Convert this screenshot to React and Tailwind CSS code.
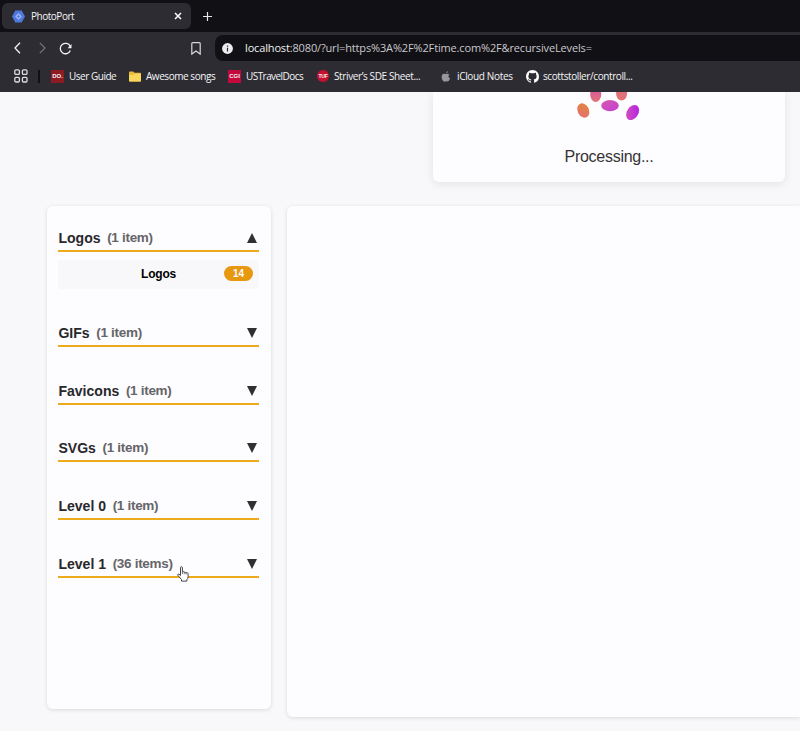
import React from "react";

const sections = [
  { title: "Logos", count: "(1 item)", open: true },
  { title: "GIFs", count: "(1 item)" },
  { title: "Favicons", count: "(1 item)" },
  { title: "SVGs", count: "(1 item)" },
  { title: "Level 0", count: "(1 item)" },
  { title: "Level 1", count: "(36 items)" },
];

function TabStrip() {
  return (
    <div className="flex h-8 items-start bg-[#111014] pl-[2px] pt-[3px]">
      <div className="flex h-[26px] w-[189px] items-center rounded-md bg-[#2d2c32] pl-[10px] pr-[9px]">
        <svg width="13" height="13" viewBox="0 0 13 13">
          <path d="M3.3 .4h6.4L13 6.5l-3.3 6.1H3.3L0 6.5z" fill="#4f78dd" />
          <path d="M6.5 3l3.5 3.5-3.5 3.5L3 6.5z" fill="#96b2f3" />
          <path d="M5 6.5h3M6.5 5v3" stroke="#4f78dd" strokeWidth=".8" />
        </svg>
        <span className="ml-[6px] text-[10px] tracking-[-0.48px] text-[#f4f4f6]">PhotoPort</span>
        <svg className="ml-auto" width="8" height="8" viewBox="0 0 8 8" stroke="#fff" strokeWidth="1.5">
          <path d="M1 1l6 6M7 1L1 7" />
        </svg>
      </div>
      <svg className="ml-[12px] mt-[9px]" width="9" height="9" viewBox="0 0 9 9" stroke="#e6e6e8" strokeWidth="1.2">
        <path d="M4.5 0v9M0 4.5h9" />
      </svg>
    </div>
  );
}

function Toolbar() {
  return (
    <div className="flex h-8 items-center pl-[14px]">
      <svg width="7" height="12" viewBox="0 0 7 12" fill="none" stroke="#f2f2f4" strokeWidth="1.3">
        <path d="M6 .8L1 6l5 5.2" />
      </svg>
      <svg className="ml-[18px]" width="7" height="12" viewBox="0 0 7 12" fill="none" stroke="#77767c" strokeWidth="1.2">
        <path d="M.8 .8L6 6 .8 11.2" />
      </svg>
      <svg className="ml-[13px]" width="13" height="13" viewBox="0 0 13 13" fill="none" stroke="#f2f2f4" strokeWidth="1.3">
        <path d="M11.3 8.5A5.2 5.2 0 1 1 11.2 4.3" />
        <path d="M12.5 2v4.2H8.6z" fill="#f2f2f4" stroke="none" />
      </svg>
      <svg className="ml-[119px]" width="10" height="13" viewBox="0 0 10 13" fill="none" stroke="#d8d8db" strokeWidth="1.2">
        <path d="M1.7 .7h6.6q.9 0 .9.9v10.5L5 9 .8 12.1V1.6q0-.9.9-.9z" />
      </svg>
      <div className="ml-[14px] flex h-[26px] flex-1 items-center rounded-l-lg bg-[#111014] pl-[7px]">
        <svg width="11" height="11" viewBox="0 0 11 11">
          <circle cx="5.5" cy="5.5" r="5.4" fill="#ececef" />
          <path d="M5.5 4.8v3.6M5.5 2.4v1.3" stroke="#29282d" strokeWidth="1.2" />
        </svg>
        <span className="ml-3 whitespace-nowrap text-[11px] tracking-[-0.15px] text-[#c9c9ce]">
          <span className="text-[#f0f0f2]">localhost</span>:8080/?url=https%3A%2F%2Ftime.com%2F&amp;recursiveLevels=
        </span>
      </div>
    </div>
  );
}

function Bookmark({ icon, label, className }) {
  return (
    <div className={"flex shrink-0 items-center whitespace-nowrap text-[10px] text-[#f4f4f6] " + className}>
      {icon}
      <span className="ml-[5px]">{label}</span>
    </div>
  );
}

function Bookmarks() {
  return (
    <div className="flex h-[28px] items-center pb-[4px] pl-[14px]">
      <svg width="14" height="14" viewBox="0 0 14 14" fill="none" stroke="#dedee1" strokeWidth="1.3">
        <rect x=".8" y=".8" width="4.6" height="4.6" rx="1.2" />
        <rect x="8.4" y=".8" width="4.6" height="4.6" rx="1.2" />
        <rect x=".8" y="8.4" width="4.6" height="4.6" rx="1.2" />
        <rect x="8.4" y="8.4" width="4.6" height="4.6" rx="1.2" />
      </svg>
      <div className="ml-[10px] h-[13px] w-[2px] bg-[#111014]" />
      <Bookmark
        className="ml-[11px] w-[78px] tracking-[-0.48px]"
        label="User Guide"
        icon={<span className="flex h-[13px] w-[13px] items-center justify-center bg-[#8e1b22] font-['Liberation_Sans'] text-[6px] font-bold tracking-normal">DO.</span>}
      />
      <Bookmark
        className="w-[99px] tracking-[-0.45px]"
        label="Awesome songs"
        icon={
          <svg width="12" height="11" viewBox="0 0 12 11">
            <path d="M0 1.2Q0 .5.7.5h3.6l1.2 1.3h5.8q.7 0 .7.7v7.3q0 .7-.7.7H.7q-.7 0-.7-.7z" fill="#e9b93a" />
            <path d="M0 3.7h4.6l1-1h5.7q.7 0 .7.7v6.4q0 .7-.7.7H.7q-.7 0-.7-.7z" fill="#f8d75c" />
          </svg>
        }
      />
      <Bookmark
        className="w-[89px] tracking-[-0.56px]"
        label="USTravelDocs"
        icon={<span className="flex h-[13px] w-[13px] items-center justify-center bg-[#c3093b] font-['Liberation_Sans'] text-[6px] font-bold tracking-normal">CGI</span>}
      />
      <Bookmark
        className="w-[124px] tracking-[-0.38px]"
        label="Striver’s SDE Sheet..."
        icon={<span className="flex h-3 w-3 items-center justify-center rounded-full bg-[#c8102e] font-['Liberation_Sans'] text-[5px] font-bold leading-none tracking-tighter">TUF</span>}
      />
      <Bookmark
        className="w-[85px] tracking-[-0.34px]"
        label="iCloud Notes"
        icon={
          <svg className="mr-px" width="10" height="11" viewBox="0 0 10 11" fill="#98979b">
            <path d="M7 0q.2 1.7-1.8 2.5Q5.100 .8 7 0zM5.200 3.100q1.500-.8 3.200.2-2.200 2.300.7 4.100Q7.900 11.100 5.300 10.300 1.900 11.700.8 7.300.2 2.300 3.800 2.700q.8.1 1.400.4z" />
          </svg>
        }
      />
      <Bookmark
        className="tracking-[-0.4px]"
        label="scottstoller/controll..."
        icon={
          <svg className="-mr-px" width="13" height="13" viewBox="0 0 16 16" fill="#fff">
            <path d="M8 0C3.580 0 0 3.580 0 8c0 3.540 2.290 6.530 5.470 7.590.4.070.55-.17.55-.38 0-.19-.01-.82-.01-1.490-2.010.37-2.530-.49-2.690-.94-.09-.23-.48-.94-.82-1.130-.28-.15-.68-.52-.01-.53.63-.01 1.080.58 1.230.82.72 1.210 1.870.87 2.330.66.070-.52.28-.87.51-1.070-1.780-.2-3.640-.89-3.640-3.950 0-.87.31-1.590.82-2.150-.08-.2-.36-1.020.08-2.120 0 0 .67-.21 2.200.82.64-.18 1.320-.27 2-.27s1.360.09 2 .27c1.530-1.040 2.200-.82 2.200-.82.44 1.100.16 1.920.08 2.120.51.56.82 1.270.82 2.150 0 3.070-1.870 3.750-3.650 3.950.29.25.54.73.54 1.480 0 1.070-.01 1.930-.01 2.200 0 .21.15.46.55.38A8.010 8.010 0 0 0 16 8c0-4.420-3.580-8-8-8z" />
          </svg>
        }
      />
    </div>
  );
}

function Loader() {
  return (
    <svg className="mx-auto" width="70" height="30" viewBox="0 0 70 30">
      <defs>
        <linearGradient id="dotA" x1="0" y1="0" x2="0" y2="1"><stop stopColor="#d64fa8" /><stop offset="1" stopColor="#e17675" /></linearGradient>
        <linearGradient id="dotB" x1="1" y1="0" x2="0" y2="1"><stop stopColor="#df6f88" /><stop offset="1" stopColor="#e2736c" /></linearGradient>
        <linearGradient id="dotC" x1="1" y1="0" x2="0" y2="1"><stop stopColor="#e78534" /><stop offset="1" stopColor="#df6f7c" /></linearGradient>
        <linearGradient id="dotD" x1="0" y1="0" x2="1" y2="1"><stop stopColor="#d65aac" /><stop offset="1" stopColor="#c33ed4" /></linearGradient>
        <linearGradient id="dotE" x1="1" y1="0" x2="0" y2="1"><stop stopColor="#b01bea" /><stop offset="1" stopColor="#d755b5" /></linearGradient>
      </defs>
      <ellipse cx="21.700" cy="2.500" rx="5.500" ry="7.500" fill="url(#dotA)" />
      <ellipse cx="47.600" cy="1.500" rx="5.500" ry="7" fill="url(#dotB)" />
      <ellipse cx="9.300" cy="18.500" rx="5.600" ry="7.500" transform="rotate(-28 9.300 18.500)" fill="url(#dotC)" />
      <ellipse cx="36" cy="13.600" rx="8.800" ry="5.600" fill="url(#dotD)" />
      <ellipse cx="58.600" cy="20.500" rx="5.700" ry="8.200" transform="rotate(32 58.600 20.500)" fill="url(#dotE)" />
    </svg>
  );
}

function Section({ title, count, open }) {
  return (
    <div className={open ? "mb-[32px]" : "mb-[31.7px]"}>
      <div className="flex h-[26px] items-start border-b-2 border-[#ecaa1c] leading-6">
        <span className="h-6 pl-[0.4px] text-[14.05px] font-bold text-[#28282a]">{title}</span>
        <span className="ml-[6.600px] h-6 text-[13.5px] font-bold tracking-[-0.3px] text-[#666568]">{count}</span>
        <svg className="ml-auto mr-[2px] mt-[7px]" width="10" height="10" viewBox="0 0 10 10" fill="#303033">
          <path d={open ? "M5 0l5 10H0z" : "M0 0h10L5 10z"} />
        </svg>
      </div>
      {open && (
        <div className="mt-2 grid h-[29px] grid-cols-[1fr_auto_1fr] items-center rounded bg-[#f8f8fb] pb-[2px] pr-[6px]">
          <span className="col-start-2 pl-[6px] text-[12px] font-bold tracking-[-0.2px] text-black">Logos</span>
          <span className="flex h-[15px] w-[29px] items-center justify-center justify-self-end rounded-full bg-[#e7980f] text-[10px] font-bold text-white">14</span>
        </div>
      )}
    </div>
  );
}

export default function App() {
  return (
    <div className="relative h-[731px] w-[800px] overflow-hidden bg-[#f8f8fb] font-['Liberation_Sans',sans-serif]">
      <header className="h-[92px] bg-[#2d2c32] font-['Open_Sans',sans-serif]">
        <TabStrip />
        <Toolbar />
        <Bookmarks />
      </header>
      <div className="h-[114px] overflow-hidden pl-[433px]">
        <div className="flex h-[90px] w-[352px] flex-col rounded-b-md bg-[#fdfcff] shadow-[0_2px_10px_rgba(0,0,0,0.09)]">
          <Loader />
          <p className="mt-[24px] text-center text-[16px] leading-[22px] tracking-[-0.27px] text-[#333335]">Processing...</p>
        </div>
      </div>
      <main className="flex items-start gap-4 pl-[47px]">
        <aside className="h-[503px] w-[224px] rounded-md bg-[#fdfcff] pl-[11px] pr-3 pt-5 shadow-[0_1px_4px_rgba(0,0,0,0.12)]">
          {sections.map((s) => (
            <Section key={s.title} {...s} />
          ))}
        </aside>
        <section className="h-[511px] flex-1 rounded-l-md bg-[#fdfcff] shadow-[0_1px_4px_rgba(0,0,0,0.12)]" />
      </main>
      <svg className="absolute left-[177px] top-[566px]" width="12" height="16" viewBox="0 0 12 16" fill="#fff" stroke="#454449" strokeWidth="1" strokeLinejoin="round">
        <path d="M3.500 9.500V1.700q0-1 .9-1t1 1v4q1.400-.6 1.700.5 1.500-.5 1.800.6 2-.5 2.200 1v3q0 1.800-1.200 2.700v1.600H4.500v-1.600L.8 9.300q-.4-1.300 1-1.200z" />
        <path d="M5.400 5.700v2.400M7.200 6.200v2M9 6.800v1.700" fill="none" strokeWidth=".7" />
      </svg>
    </div>
  );
}
